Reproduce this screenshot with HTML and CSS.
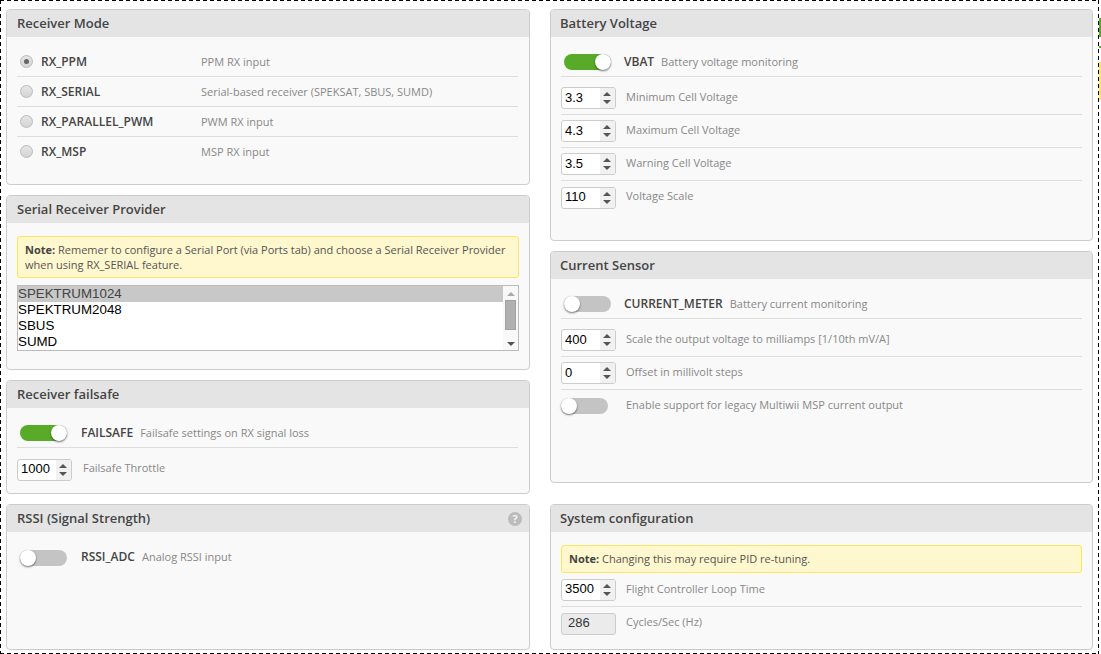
FILE: index.html
```html
<!DOCTYPE html>
<html lang="en">
<head>
  <meta charset="UTF-8" />
  <title>Configuration</title>
  <link rel="stylesheet" href="styles.css">
</head>
<body>
<div class="page">
  <div class="col col-left">
    <section class="panel panel-mode">
      <h2 class="panel-head">Receiver Mode</h2>
      <div class="panel-body">
        <div class="mode-row"><span class="radio radio-on"></span><b class="mode-name">RX_PPM</b><span class="desc">PPM RX input</span></div>
        <div class="mode-row"><span class="radio"></span><b class="mode-name">RX_SERIAL</b><span class="desc">Serial-based receiver (SPEKSAT, SBUS, SUMD)</span></div>
        <div class="mode-row"><span class="radio"></span><b class="mode-name">RX_PARALLEL_PWM</b><span class="desc">PWM RX input</span></div>
        <div class="mode-row no-line"><span class="radio"></span><b class="mode-name">RX_MSP</b><span class="desc">MSP RX input</span></div>
      </div>
    </section>

    <section class="panel panel-provider">
      <h2 class="panel-head">Serial Receiver Provider</h2>
      <div class="panel-body body-note">
        <p class="note"><b>Note:</b> Rememer to configure a Serial Port (via Ports tab) and choose a Serial Receiver Provider<br>when using RX_SERIAL feature.</p>
        <div class="listbox">
          <ul class="list-items">
            <li class="selected">SPEKTRUM1024</li>
            <li>SPEKTRUM2048</li>
            <li>SBUS</li>
            <li>SUMD</li>
          </ul>
          <div class="scrollbar">
            <span class="scroll-up"></span>
            <span class="scroll-thumb"></span>
            <span class="scroll-down"></span>
          </div>
        </div>
      </div>
    </section>

    <section class="panel panel-failsafe">
      <h2 class="panel-head">Receiver failsafe</h2>
      <div class="panel-body">
        <div class="toggle-row line"><span class="toggle toggle-on"></span><b class="toggle-name">FAILSAFE</b><span class="desc">Failsafe settings on RX signal loss</span></div>
        <div class="num-row no-line"><div class="num"><input value="1000"><span class="spin"></span></div><span class="desc">Failsafe Throttle</span></div>
      </div>
    </section>

    <section class="panel panel-last">
      <h2 class="panel-head">RSSI (Signal Strength)<span class="help">?</span></h2>
      <div class="panel-body">
        <div class="toggle-row"><span class="toggle"></span><b class="toggle-name">RSSI_ADC</b><span class="desc">Analog RSSI input</span></div>
      </div>
    </section>
  </div>

  <div class="col col-right">
    <section class="panel panel-battery">
      <h2 class="panel-head">Battery Voltage</h2>
      <div class="panel-body">
        <div class="toggle-row line"><span class="toggle toggle-on"></span><b class="toggle-name">VBAT</b><span class="desc">Battery voltage monitoring</span></div>
        <div class="num-row"><div class="num"><input value="3.3"><span class="spin"></span></div><span class="desc">Minimum Cell Voltage</span></div>
        <div class="num-row"><div class="num"><input value="4.3"><span class="spin"></span></div><span class="desc">Maximum Cell Voltage</span></div>
        <div class="num-row"><div class="num"><input value="3.5"><span class="spin"></span></div><span class="desc">Warning Cell Voltage</span></div>
        <div class="num-row no-line"><div class="num"><input value="110"><span class="spin"></span></div><span class="desc">Voltage Scale</span></div>
      </div>
    </section>

    <section class="panel panel-current">
      <h2 class="panel-head">Current Sensor</h2>
      <div class="panel-body">
        <div class="toggle-row line"><span class="toggle"></span><b class="toggle-name">CURRENT_METER</b><span class="desc">Battery current monitoring</span></div>
        <div class="num-row"><div class="num"><input value="400"><span class="spin"></span></div><span class="desc">Scale the output voltage to milliamps [1/10th mV/A]</span></div>
        <div class="num-row"><div class="num"><input value="0"><span class="spin"></span></div><span class="desc">Offset in millivolt steps</span></div>
        <div class="num-row no-line"><div class="toggle-box"><span class="toggle"></span></div><span class="desc">Enable support for legacy Multiwii MSP current output</span></div>
      </div>
    </section>

    <section class="panel panel-last">
      <h2 class="panel-head">System configuration</h2>
      <div class="panel-body body-note">
        <p class="note note-small"><b>Note:</b> Changing this may require PID re-tuning.</p>
        <div class="num-row loop-row"><div class="num"><input value="3500"><span class="spin"></span></div><span class="desc">Flight Controller Loop Time</span></div>
        <div class="num-row no-line"><div class="num num-off"><input value="286" disabled></div><span class="desc">Cycles/Sec (Hz)</span></div>
      </div>
    </section>
  </div>
</div>
<span class="edge edge-green"></span>
<span class="edge edge-tick"></span>
<span class="edge edge-yellow"></span>
</body>
</html>
```

FILE: styles.css
```css
* {
  box-sizing: border-box;
}

html, body {
  margin: 0;
  height: 654px;
  overflow: hidden;
  background: #fff;
}

body {
  font-family: 'Open Sans', sans-serif;
  font-size: 11px;
  color: #444;
  position: relative;
}

/* dashed frame: 4px dash, 3px gap */
.page {
  width: 1099px;
  height: 654px;
  padding: 9px 0 0 6px;
  display: flex;
  gap: 20px;
  overflow: hidden;
  background:
    repeating-linear-gradient(90deg, #000 0 4px, transparent 4px 7px) left top / 100% 1px no-repeat,
    repeating-linear-gradient(90deg, #000 0 4px, transparent 4px 7px) left bottom / 100% 1px no-repeat,
    repeating-linear-gradient(180deg, #000 0 4px, transparent 4px 7px) left top / 1px 100% no-repeat,
    repeating-linear-gradient(180deg, #000 0 4px, transparent 4px 7px) right top / 1px 100% no-repeat;
}

.col {
  display: flex;
  flex-direction: column;
  gap: 10px;
}
.col-left { width: 524px; }
.col-right { width: 543px; }

.panel {
  border: 1px solid #ccc;
  border-radius: 4px;
  background: #f9f9f9;
  overflow: hidden;
}
.panel-mode { height: 176px; }
.panel-provider { height: 175px; }
.panel-failsafe { height: 114px; }
.panel-battery { height: 232px; }
.panel-current { height: 232px; }
.panel-current + .panel-last { margin-top: 11px; }
.panel-last { height: 146px; }

.panel-head {
  display: flex;
  justify-content: space-between;
  align-items: center;
  height: 27px;
  margin: 0;
  padding: 0 7px 2px 10px;
  background: #e4e4e4;
  font-size: 13px;
  font-weight: 600;
  color: #444;
}
.col-right .panel-head {
  padding-left: 9px;
}

.help {
  width: 14px;
  height: 14px;
  margin-top: 2px;
  border-radius: 50%;
  background: #bbb;
  color: #f4f4f4;
  font-size: 11px;
  font-weight: 700;
  line-height: 14px;
  text-align: center;
}

.panel-body {
  padding: 9px 10px 0;
}
.panel-mode .panel-body {
  padding-top: 10px;
}
.body-note {
  padding-top: 13px;
}

.desc {
  color: #888;
  font-size: 11px;
}

/* receiver mode */
.mode-row {
  display: flex;
  align-items: center;
  height: 30px;
  margin-right: 1px;
  border-bottom: 1px solid #ddd;
}
.mode-row.no-line {
  height: 29px;
}
.no-line { border-bottom: 0 !important; }

.radio {
  width: 13px;
  height: 13px;
  margin: 0 8px 0 3px;
  border: 1px solid #bbb;
  border-radius: 50%;
  background: linear-gradient(#e6e6e6, #d4d4d4);
  display: flex;
  align-items: center;
  justify-content: center;
}
.radio-on::after {
  content: "";
  width: 5px;
  height: 5px;
  border-radius: 50%;
  background: #666;
}

.mode-name {
  width: 160px;
  font-size: 12px;
  font-weight: 600;
  color: #444;
}

/* toggles */
.toggle {
  display: block;
  flex: none;
  position: relative;
  width: 47px;
  height: 16px;
  border-radius: 8px;
  background: #c4c4c4;
}
.toggle::after {
  content: "";
  position: absolute;
  left: 0;
  top: 0;
  width: 16px;
  height: 16px;
  border-radius: 50%;
  background: #fff;
  box-shadow: 0 1px 2px rgba(0, 0, 0, 0.55);
}
.toggle-on {
  background: #59aa29;
}
.toggle-on::after {
  left: 31px;
}

.toggle-row {
  display: flex;
  align-items: center;
  height: 31px;
  padding-left: 3px;
}
.toggle-row .toggle {
  margin-top: 2px;
}
.toggle-row.line {
  margin-bottom: 5px;
  border-bottom: 1px solid #ddd;
}
.col-left .toggle-row.line {
  margin-right: 1px;
}
.toggle-name {
  margin: 0 7px 0 14px;
  font-size: 12px;
  font-weight: 600;
  color: #444;
}
.col-right .toggle-name {
  margin-left: 13px;
}

.toggle-box {
  width: 65px;
  padding-bottom: 2px;
}

/* number inputs */
.num-row {
  display: flex;
  align-items: center;
  height: 33px;
  border-bottom: 1px solid #ddd;
}
.num-row .desc {
  padding-bottom: 4px;
}
.loop-row.num-row .desc {
  padding-bottom: 2px;
}
.num {
  display: flex;
  flex: none;
  width: 55px;
  height: 22px;
  margin-right: 11px;
  border: 1px solid #ccc;
  border-radius: 3px;
  background: #fff;
  overflow: hidden;
}
.col-right .num {
  margin-right: 10px;
}
.num input {
  width: 38px;
  padding: 0 0 2px 3px;
  border: 0;
  outline: 0;
  background: transparent;
  font-family: 'Liberation Sans', sans-serif;
  font-size: 13px;
  color: #000;
}
.spin {
  position: relative;
  flex: none;
  width: 15px;
  background: #f1f1f1;
}
.spin::before,
.spin::after {
  content: "";
  position: absolute;
  left: 3px;
  border-left: 4px solid transparent;
  border-right: 4px solid transparent;
}
.spin::before {
  top: 4px;
  border-bottom: 4px solid #555;
}
.spin::after {
  bottom: 4px;
  border-top: 4px solid #555;
}
.num-off {
  background: #ebebeb;
}
.num-off input {
  padding-left: 6px;
  color: #333;
}

/* notes */
.note {
  margin: 0 0 7px;
  padding: 5px 7px 3px;
  min-height: 42px;
  background: #fff7cd;
  border: 1px solid #ffe55f;
  border-radius: 3px;
  font-size: 11px;
  line-height: 15px;
  color: #555;
}
.note b {
  color: #444;
}
.note-small {
  min-height: 28px;
  margin-bottom: 0;
  padding: 4px 7px;
  line-height: 18px;
}
.loop-row {
  height: 34px;
}

/* provider list */
.listbox {
  display: flex;
  height: 66px;
  border: 1px solid #bbb;
  background: #fff;
}
.list-items {
  flex: 1;
  margin: 0;
  padding: 0;
  list-style: none;
  font-family: 'Liberation Sans', sans-serif;
  font-size: 13.33px;
  line-height: 16px;
  color: #000;
}
.list-items .selected {
  background: #c8c8c8;
  color: #444;
}
.scrollbar {
  display: flex;
  flex-direction: column;
  align-items: center;
  flex: none;
  width: 15px;
  background: #f8f8f8;
}
.scroll-up,
.scroll-down {
  width: 0;
  height: 0;
  border-left: 4px solid transparent;
  border-right: 4px solid transparent;
}
.scroll-up {
  margin-top: 6px;
  border-bottom: 4px solid #aaa;
}
.scroll-thumb {
  width: 11px;
  height: 30px;
  margin: 4px 0;
  background: #b0b0b0;
  border: 1px solid #a2a2a2;
}
.scroll-down {
  margin-top: 8px;
  border-top: 4px solid #555;
}

/* bits of the next pane showing past the dashed edge */
.edge {
  position: absolute;
  left: 1099px;
  width: 2px;
}
.edge-green {
  top: 18px;
  height: 19px;
  background: #59aa29;
}
.edge-tick {
  top: 46px;
  height: 2px;
  background: #59aa29;
}
.edge-yellow {
  top: 62px;
  height: 38px;
  background: #ffe55f;
}
```
